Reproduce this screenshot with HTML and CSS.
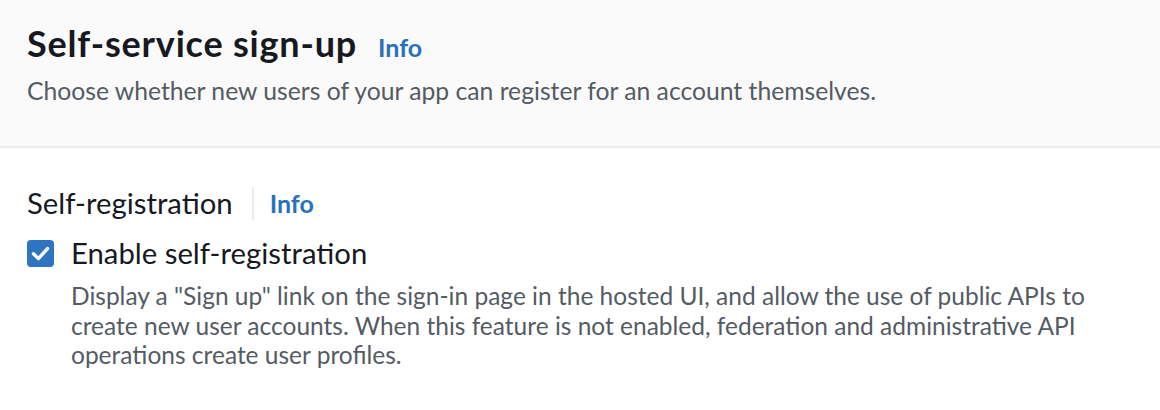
FILE: index.html
```html
<!DOCTYPE html>
<html>
<head>
<meta charset="utf-8">
<link rel="stylesheet" href="styles.css">
</head>
<body>
<div class="panel">
  <div class="header">
    <div class="title-row">
      <h2 class="title">Self-service sign-up</h2>
      <a class="info info-lg">Info</a>
    </div>
    <p class="desc">Choose whether new users of your app can register for an account themselves.</p>
  </div>
  <div class="content">
    <div class="field-label">
      <span class="label-text">Self-registration</span>
      <span class="sep"></span>
      <a class="info info-md">Info</a>
    </div>
    <div class="check-row">
      <span class="checkbox">
        <svg viewBox="0 0 27 27" width="27" height="27"><path d="M6.5 13.8 L11.4 18.6 L20.5 8.6" fill="none" stroke="#fff" stroke-width="3.4" stroke-linecap="round" stroke-linejoin="round"/></svg>
      </span>
      <div class="check-body">
        <div class="check-label">Enable self-registration</div>
        <p class="check-desc">Display a "Sign up" link on the sign-in page in the hosted UI, and allow the use of public APIs to create new user accounts. When this feature is not enabled, federation and administrative API operations create user profiles.</p>
      </div>
    </div>
  </div>
</div>
</body>
</html>
```

FILE: styles.css
```css
html, body {
  margin: 0;
  padding: 0;
  background: #ffffff;
}
body {
  font-family: "Lato", "Open Sans", sans-serif;
  color: #16191f;
  width: 1160px;
  height: 410px;
  overflow: hidden;
}
.header {
  background: #fafafa;
  border-bottom: 2px solid #eaeded;
  padding: 21px 27px 39px;
  height: 86px;
}
.title-row {
  display: flex;
  align-items: baseline;
  gap: 21px;
}
.title {
  margin: 0;
  font-size: 36px;
  line-height: 44px;
  font-weight: 700;
  letter-spacing: 0.8px;
  color: #16191f;
}
.info {
  color: #2a71bb;
  font-weight: 700;
  text-decoration: none;
}
.info-lg {
  font-size: 25px;
}
.info-md {
  font-size: 25px;
}
.desc {
  margin: 11px 0 0;
  font-size: 24.7px;
  line-height: 30px;
  color: #545b64;
}
.content {
  padding: 37px 27px 0;
}
.field-label {
  display: flex;
  align-items: center;
  height: 36px;
}
.label-text {
  font-size: 29.3px;
  line-height: 36px;
}
.sep {
  width: 2px;
  height: 33px;
  background: #eaeded;
  margin: 0 16px 0 19px;
}
.check-row {
  display: flex;
  align-items: flex-start;
  gap: 17px;
  margin-top: 14px;
}
.checkbox {
  flex: none;
  width: 27px;
  height: 27px;
  margin-top: 5px;
  background: #2e74c0;
  border-radius: 4px;
  display: flex;
}
.check-label {
  font-size: 29.3px;
  line-height: 36px;
}
.check-desc {
  margin: 10px 0 0;
  font-size: 24.5px;
  line-height: 29.5px;
  color: #545b64;
}
```
